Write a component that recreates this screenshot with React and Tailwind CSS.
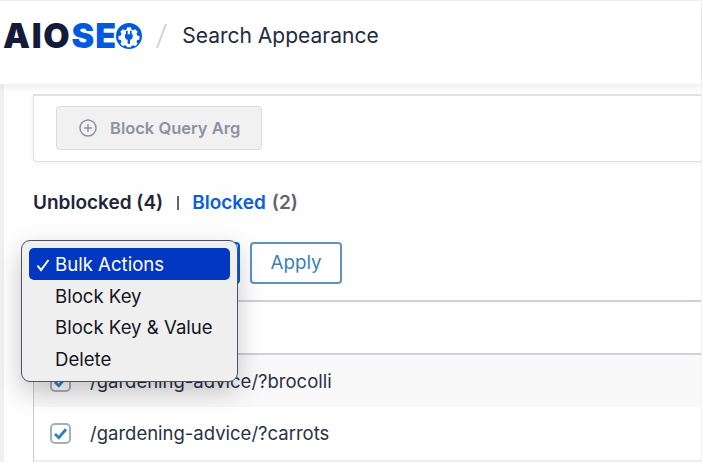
import React from "react";

const font = { fontFamily: "Inter, sans-serif" };

function Gear() {
  return (
    <svg width="26" height="26" viewBox="0 0 30 30" className="shrink-0 -ml-[1px]">
      <circle cx="15" cy="15" r="15" fill="#005ae0" />
      <path
        fill="#fff"
        d="M12.800 5h4.400l.6 2.600 1.900.8 2.300-1.300 3 3-1.300 2.300.8 1.900 2.600.6v4.200l-2.600.6-.8 1.900 1.300 2.300-3 3-2.300-1.300-1.900.8-.6 1.600h-4.400l-.6-1.600-1.900-.8-2.300 1.300-3-3 1.300-2.300-.8-1.900-2.600-.6v-4.200l2.600-.6.8-1.900-1.300-2.300 3-3 2.300 1.300 1.900-.8z"
      />
      <path fill="#005ae0" d="M11.500 9h2v4h2.600V9h2v4h1.200v2.500c0 2-1.300 3.500-3.100 3.900V24h-2.800v-4.600c-1.800-.4-3.100-1.900-3.100-3.900V13h1.200z" />
    </svg>
  );
}

function Check() {
  return (
    <svg viewBox="0 0 20 20" className="w-[19px] h-[19px]">
      <path d="M3.500 10.500l4.500 4.500 8.500-10" fill="none" stroke="#2c7fc9" strokeWidth="3.200" />
    </svg>
  );
}

function Checkbox() {
  return (
    <span className="w-[21px] h-[21px] rounded-[5px] border-2 border-[#a9adb8] bg-white flex items-center justify-center shrink-0">
      <Check />
    </span>
  );
}

function Row({ text, shaded, tall }) {
  return (
    <div className={`${tall ? "h-[53px]" : "h-[52px] pt-[1px]"} flex items-center gap-[19px] pl-[16px] ${shaded ? "bg-[#f9f9f9]" : "bg-white"}`}>
      <Checkbox />
      <span className="text-[18.500px] text-[#2a3145]">{text}</span>
    </div>
  );
}

export default function App() {
  return (
    <div style={font} className="relative w-[702px] h-[462px] overflow-hidden bg-[#f0f0f1] pl-[4px] pr-px">
      <div className="bg-[#fefefe] h-[462px] flex flex-col">
        <header className="relative z-10 -ml-[4px] h-[84px] shrink-0 bg-white flex items-center pl-[3px] pb-[14px] border-t border-[#eeeeee] shadow-[0_3px_8px_rgba(0,0,0,0.08)]">
          <div className="flex items-center h-[30px]">
            <span className="text-[34px] leading-none font-black tracking-[1.700px] text-[#141b38]">AIO</span>
            <span className="text-[34px] leading-none font-black tracking-[1.200px] text-[#005ae0]">SE</span>
            <Gear />
          </div>
          <svg width="14" height="28" viewBox="0 0 14 28" className="ml-[12px]">
            <path d="M12 2L3 26" stroke="#cfd1d6" strokeWidth="2" />
          </svg>
          <span className="ml-[14px] text-[21px] text-[#232a40]">Search Appearance</span>
        </header>

        <main className="flex-1 pl-[29px] flex flex-col">
          <section className="mt-[10px] h-[68px] shrink-0 bg-white border-t-2 border-b border-l border-[#dfe0e3] rounded-bl-[4px] pl-[22px] pt-[10px] shadow-[0_2px_4px_rgba(0,0,0,0.04)]">
            <div className="w-[206px] h-[44px] bg-[#f1f1f1] border border-[#dcdcdc] rounded-[4px] flex items-center pl-[21px] gap-[12px] text-[#8f929e]">
              <svg width="20" height="20" viewBox="0 0 20 20" fill="none" stroke="#8f929e" strokeWidth="1.500">
                <circle cx="10" cy="10" r="8" />
                <path d="M10 6v8M6 10h8" />
              </svg>
              <span className="text-[16.500px] font-semibold">Block Query Arg</span>
            </div>
          </section>

          <div className="mt-[30px] h-[22px] flex items-center text-[19px] font-semibold">
            <span className="text-[#1f2539]">Unblocked (4)</span>
            <span className="ml-[14px] w-[2px] h-[14px] bg-[#5f6470]" />
            <span className="ml-[13px] text-[#0b5fdc]">Blocked</span>
            <span className="ml-[6px] text-[#60636d]">(2)</span>
          </div>

          <div className="mt-[28px] h-[42px] flex items-center">
            <div className="w-[207px] h-[42px] rounded-[4px] border-2 border-[#005ae0] bg-white" />
            <div className="ml-[10px] w-[92px] h-[42px] rounded-[4px] border-2 border-[#5a93c4] bg-white flex items-center justify-center pt-[1px] text-[18.800px] text-[#3d7fb5]">
              Apply
            </div>
          </div>

          <div className="mt-[16px] flex-1 border-l border-[#c8ccd4]">
            <div className="h-[55px] border-t-2 border-b-2 border-[#cfd1d8] bg-white" />
            <Row text="/gardening-advice/?brocolli" shaded />
            <Row text="/gardening-advice/?carrots" tall />
            <div className="border-t-2 border-[#eeeeee]" />
          </div>
        </main>
      </div>

      <div className="absolute z-20 left-[21px] top-[240px] w-[217px] h-[142px] rounded-[9px] border border-[#4f5360] bg-[#efefef] shadow-[0_10px_26px_rgba(0,0,0,0.22)] px-[7px] pt-[7px] text-[18.600px] text-[#15161c]">
        <div className="relative h-[32px] rounded-[5px] bg-[#0237c2] text-white flex items-center pl-[26px] pt-[1px]">
          <svg viewBox="0 0 14 14" className="absolute left-[7px] w-[14px] h-[14px]">
            <path d="M1.500 7.500l3.500 4.500 7.500-10" fill="none" stroke="#fff" strokeWidth="2" />
          </svg>
          Bulk Actions
        </div>
        <div className="h-[31.500px] flex items-center pl-[26px] pt-[2px]">Block Key</div>
        <div className="h-[31.500px] flex items-center pl-[26px] pt-[2px]">Block Key &amp; Value</div>
        <div className="h-[31.500px] flex items-center pl-[26px] pt-[2px]">Delete</div>
      </div>
    </div>
  );
}
